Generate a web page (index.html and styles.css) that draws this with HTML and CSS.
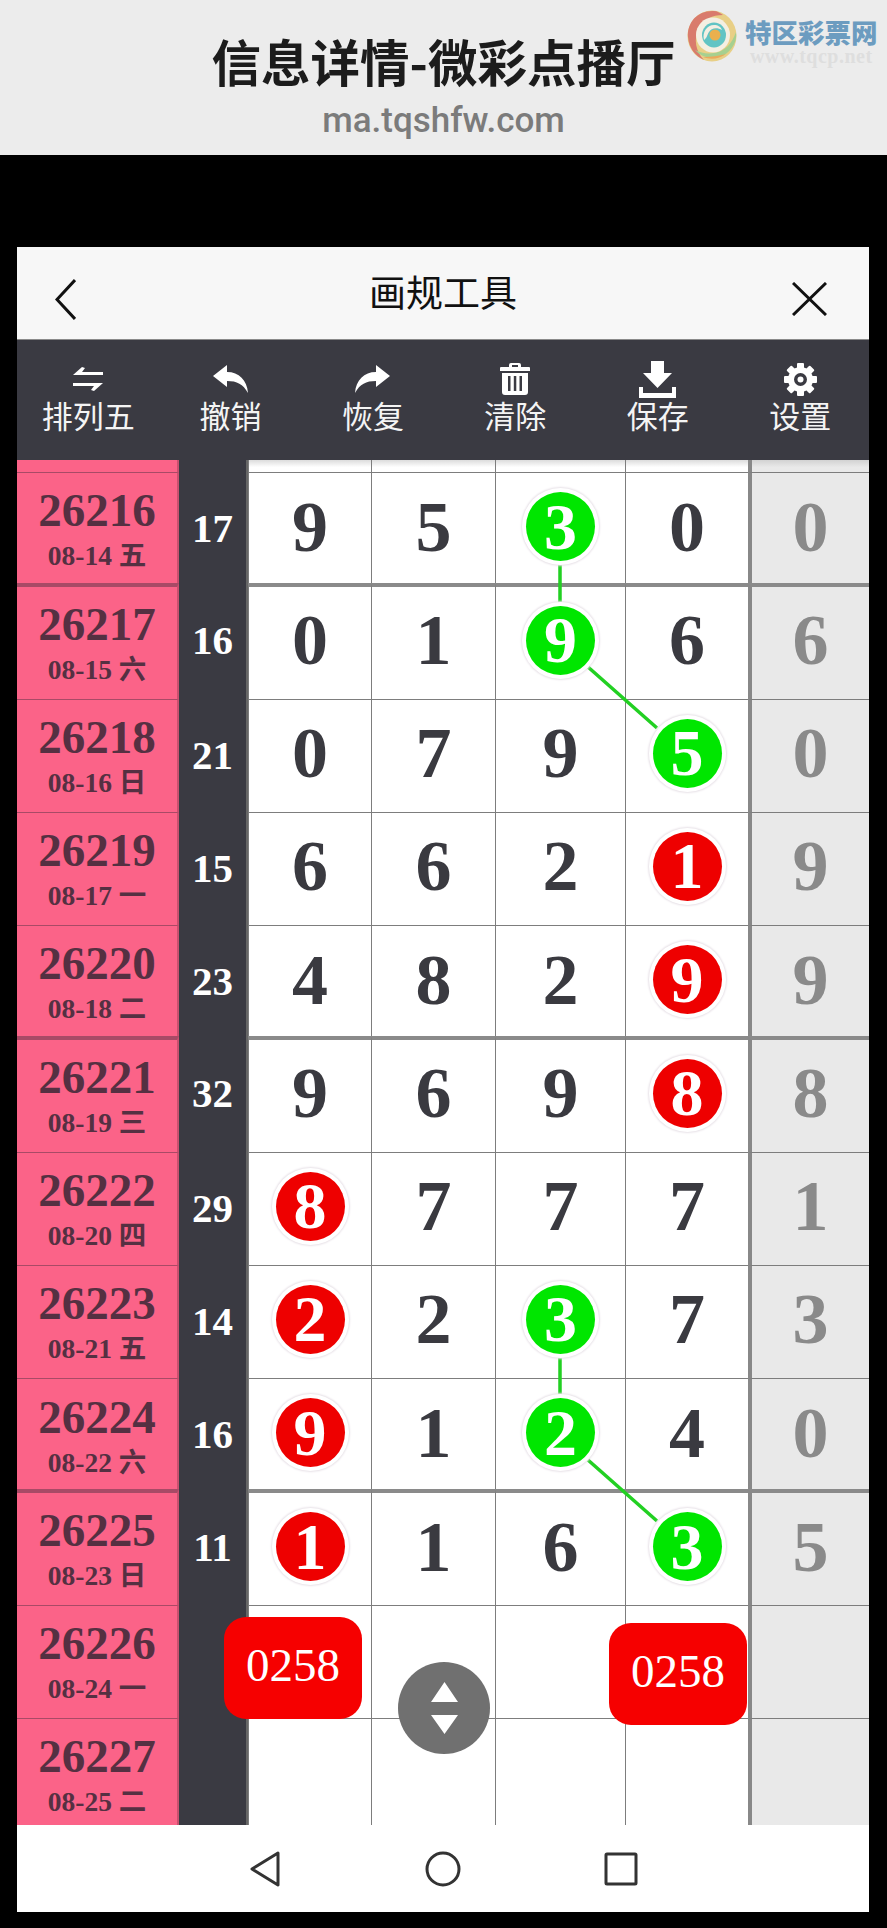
FILE: index.html
```html
<!DOCTYPE html>
<html>
  <head>
    <meta charset="utf-8" />
    <title>画规工具</title>
    <link rel="stylesheet" href="styles.css">
  </head>
  <body>
    <!-- Article header -->
    <header class="pagehead">
      <h1>信息详情-微彩点播厅</h1>
      <p class="domain">ma.tqshfw.com</p>
      <div class="watermark">
        <svg class="wm-logo" viewBox="0 0 50 52">
          <ellipse cx="25" cy="26" rx="24.500" ry="25.500" fill="#e8cf86"/>
          <path d="M27 1C11 0 0 12 1 27c1 11 7 19 16 23C9 42 6 29 12 18 17 9 25 5 36 5 33 3 30 1 27 1Z" fill="#d97b6c"/>
          <path d="M8 40c8 9 22 11 32 3 7-6 10-13 9-21-4 12-12 20-22 21-7 1-13 0-19-3Z" fill="#a6d090"/>
          <path d="M16 47c8 3 16 2 23-3-7 2-15 3-23 3Z" fill="#eba95c"/>
          <ellipse cx="26" cy="25" rx="17" ry="17.500" fill="#f4efe2"/>
          <ellipse cx="27" cy="25" rx="12" ry="12.500" fill="#62c4c4"/>
          <path d="M17 30c-2-8 3-15 10-15 4 0 7 2 8 5-5-3-11-2-13 2-2 3-2 6-5 8Z" fill="#f4efe2"/>
          <ellipse cx="28" cy="25" rx="5.500" ry="5.500" fill="#eab04e"/>
        </svg>
        <div class="wm-text">
          <span class="wm-name">特区彩票网</span>
          <span class="wm-url">www.tqcp.net</span>
        </div>
      </div>
    </header>

    <div class="window">
      <!-- Title bar -->
      <div class="titlebar">
        <svg class="back" viewBox="0 0 21 41"><path d="M20 1 2 20.500 20 40"/></svg>
        <span class="title">画规工具</span>
        <svg class="close" viewBox="0 0 35 34"><path d="M1 1 34 33M34 1 1 33"/></svg>
      </div>

      <!-- Toolbar -->
      <div class="toolbar">
        <div class="tool">
          <div class="ico"><svg width="30" height="24" viewBox="0 0 30 24"><path d="M0 8 9 0l3 1-3 4h21v3ZM30 16l-9 8-3-1 3-4H0v-3Z"/></svg></div>
          <span>排列五</span>
        </div>
        <div class="tool">
          <div class="ico"><svg width="35" height="28" viewBox="0 0 35 28"><path d="M0 11 14 0v7c12 0 20 8 21 21-5-9-11-12-21-12v6Z"/></svg></div>
          <span>撤销</span>
        </div>
        <div class="tool">
          <div class="ico"><svg width="35" height="28" viewBox="0 0 35 28"><path d="M35 11 21 0v7C9 7 1 15 0 28c5-9 11-12 21-12v6Z"/></svg></div>
          <span>恢复</span>
        </div>
        <div class="tool">
          <div class="ico"><svg width="30" height="32" viewBox="0 0 30 32"><path d="M9 4V2a2 2 0 0 1 2-2h8a2 2 0 0 1 2 2v2h8a1 1 0 0 1 1 1v3H0V5a1 1 0 0 1 1-1ZM12 2v2h6V2ZM2 10h26v19a3 3 0 0 1-3 3H5a3 3 0 0 1-3-3ZM8 13v15h2.500V13Zm5.800 0v15h2.500V13Zm5.700 0v15H22V13Z" fill-rule="evenodd"/></svg></div>
          <span>清除</span>
        </div>
        <div class="tool">
          <div class="ico"><svg width="37" height="37" viewBox="0 0 37 37"><path d="M12 0h13v12h8L18.500 27 4 12h8ZM0 26h4v6h29v-6h4v11H0Z"/></svg></div>
          <span>保存</span>
        </div>
        <div class="tool">
          <div class="ico"><svg width="33" height="33" viewBox="0 0 33 33">
            <g transform="translate(16.500 16.500)">
              <circle r="12.500"/>
              <rect x="-3.500" y="-16.500" width="7" height="33" rx="1"/>
              <rect x="-3.500" y="-16.500" width="7" height="33" rx="1" transform="rotate(45)"/>
              <rect x="-3.500" y="-16.500" width="7" height="33" rx="1" transform="rotate(90)"/>
              <rect x="-3.500" y="-16.500" width="7" height="33" rx="1" transform="rotate(135)"/>
              <circle r="6.500" fill="#3a3a42"/>
              <circle r="3"/>
            </g>
          </svg></div>
          <span>设置</span>
        </div>
      </div>

      <!-- Trend table -->
      <div class="board">
        <div class="row stub">
          <div class="date"></div><div class="sum"></div><div class="c"></div><div class="c"></div><div class="c"></div><div class="c"></div><div class="c last"></div>
        </div>

        <div class="row">
          <div class="date"><b>26216</b><small>08-14 五</small></div><div class="sum">17</div>
          <div class="c">9</div><div class="c">5</div><div class="c"><i class="ball green">3</i></div><div class="c">0</div><div class="c last">0</div>
        </div>
        <div class="row thick">
          <div class="date"><b>26217</b><small>08-15 六</small></div><div class="sum">16</div>
          <div class="c">0</div><div class="c">1</div><div class="c"><i class="ball green">9</i></div><div class="c">6</div><div class="c last">6</div>
        </div>
        <div class="row">
          <div class="date"><b>26218</b><small>08-16 日</small></div><div class="sum">21</div>
          <div class="c">0</div><div class="c">7</div><div class="c">9</div><div class="c"><i class="ball green">5</i></div><div class="c last">0</div>
        </div>
        <div class="row">
          <div class="date"><b>26219</b><small>08-17 一</small></div><div class="sum">15</div>
          <div class="c">6</div><div class="c">6</div><div class="c">2</div><div class="c"><i class="ball red">1</i></div><div class="c last">9</div>
        </div>
        <div class="row">
          <div class="date"><b>26220</b><small>08-18 二</small></div><div class="sum">23</div>
          <div class="c">4</div><div class="c">8</div><div class="c">2</div><div class="c"><i class="ball red">9</i></div><div class="c last">9</div>
        </div>
        <div class="row thick">
          <div class="date"><b>26221</b><small>08-19 三</small></div><div class="sum">32</div>
          <div class="c">9</div><div class="c">6</div><div class="c">9</div><div class="c"><i class="ball red">8</i></div><div class="c last">8</div>
        </div>
        <div class="row">
          <div class="date"><b>26222</b><small>08-20 四</small></div><div class="sum">29</div>
          <div class="c"><i class="ball red">8</i></div><div class="c">7</div><div class="c">7</div><div class="c">7</div><div class="c last">1</div>
        </div>
        <div class="row">
          <div class="date"><b>26223</b><small>08-21 五</small></div><div class="sum">14</div>
          <div class="c"><i class="ball red">2</i></div><div class="c">2</div><div class="c"><i class="ball green">3</i></div><div class="c">7</div><div class="c last">3</div>
        </div>
        <div class="row">
          <div class="date"><b>26224</b><small>08-22 六</small></div><div class="sum">16</div>
          <div class="c"><i class="ball red">9</i></div><div class="c">1</div><div class="c"><i class="ball green">2</i></div><div class="c">4</div><div class="c last">0</div>
        </div>
        <div class="row thick">
          <div class="date"><b>26225</b><small>08-23 日</small></div><div class="sum">11</div>
          <div class="c"><i class="ball red">1</i></div><div class="c">1</div><div class="c">6</div><div class="c"><i class="ball green">3</i></div><div class="c last">5</div>
        </div>
        <div class="row">
          <div class="date"><b>26226</b><small>08-24 一</small></div><div class="sum"></div>
          <div class="c"></div><div class="c"></div><div class="c"></div><div class="c"></div><div class="c last"></div>
        </div>
        <div class="row">
          <div class="date"><b>26227</b><small>08-25 二</small></div><div class="sum"></div>
          <div class="c"></div><div class="c"></div><div class="c"></div><div class="c"></div><div class="c last"></div>
        </div>

        <!-- Lines drawn by hand between the marked numbers -->
        <svg class="links" width="852" height="1365" viewBox="17 460 852 1365">
          <path d="M560 560 560 606M588 667 657 728M560 1353 560 1399M588 1460 657 1521"/>
        </svg>

        <div class="tag tag-left">0258</div>
        <div class="tag tag-right">0258</div>
        <div class="updown">
          <svg width="27" height="52" viewBox="0 0 27 52"><path d="M13.500 0 27 20H0ZM0 33h27L13.500 52Z"/></svg>
        </div>
      </div>

      <!-- System navigation -->
      <div class="navbar">
        <svg width="32" height="36" viewBox="0 0 32 36"><path d="M29 2 3 18 29 34Z"/></svg>
        <svg width="36" height="36" viewBox="0 0 36 36"><circle cx="18" cy="18" r="16"/></svg>
        <svg width="34" height="34" viewBox="0 0 34 34"><rect x="2" y="2" width="30" height="30" rx="1"/></svg>
      </div>
    </div>
  </body>
</html>
```

FILE: styles.css
```css
* {
  box-sizing: border-box;
}
html, body {
  margin: 0;
  background: #000;
}
body {
  width: 887px;
  height: 1928px;
  overflow: hidden;
  font-family: "Noto Sans CJK SC", "Noto Sans", sans-serif;
}

/* Article header */
.pagehead {
  position: relative;
  height: 155px;
  background: #ececec;
  text-align: center;
  padding-top: 29px;
}
.pagehead h1 {
  width: 470px;
  margin: 0 auto;
  font-size: 49.500px;
  line-height: 64px;
  font-weight: 700;
  white-space: nowrap;
  color: #1c1c1c;
}
.domain {
  margin: 5px 0 0;
  font-family: Roboto, "Noto Sans", sans-serif;
  font-size: 35px;
  line-height: 46px;
  font-weight: 500;
  color: #7b7b7b;
}
.watermark {
  position: absolute;
  left: 687px;
  top: 10px;
  display: flex;
  gap: 8px;
}
.wm-logo {
  width: 50px;
  height: 52px;
}
.wm-text {
  display: flex;
  flex-direction: column;
  padding-top: 7px;
}
.wm-name {
  font-size: 26.500px;
  line-height: 30px;
  font-weight: 900;
  color: #6c9cc0;
  white-space: nowrap;
}
.wm-url {
  font-family: "Liberation Serif", serif;
  font-size: 20px;
  line-height: 18px;
  font-weight: 700;
  letter-spacing: 0.5px;
  color: #dedede;
}

/* Window */
.window {
  margin: 92px 18px 0 17px;
  width: 852px;
}
.titlebar {
  display: flex;
  align-items: center;
  justify-content: space-between;
  height: 93px;
  padding: 0 42px 0 38px;
  background: #f7f7f7;
  border-bottom: 1px solid #8a8a8a;
  position: relative;
}
.titlebar svg {
  fill: none;
  stroke: #111;
  stroke-width: 3;
}
.back {
  width: 21px;
  height: 41px;
  margin-top: 12px;
}
.close {
  width: 35px;
  height: 34px;
  margin-top: 11px;
}
.title {
  position: absolute;
  left: 0;
  right: 0;
  top: 20px;
  text-align: center;
  font-size: 37px;
  line-height: 48px;
  color: #111;
}

.toolbar {
  display: grid;
  grid-template-columns: repeat(6, 142.4px);
  height: 120px;
  background: #3a3a42;
  color: #f4f4f4;
}
.tool {
  display: flex;
  flex-direction: column;
  align-items: center;
  justify-content: flex-end;
  height: 96px;
  font-size: 31px;
  line-height: 42px;
}
.ico {
  display: flex;
  align-items: center;
  height: 30px;
  fill: #fff;
}
.ico svg {
  flex-shrink: 0;
}

/* Table */
.board {
  position: relative;
  height: 1365px;
  overflow: hidden;
}
.row {
  display: grid;
  grid-template-columns: 162px 69px 123px 124px 130px 123px 121px;
  height: 113.27px;
}
.row.stub {
  height: 12px;
}
.row.thick {
  height: 115.27px;
  margin-top: -2px;
}
.date, .sum, .c {
  display: flex;
  align-items: center;
  justify-content: center;
  font-family: "Liberation Serif", serif;
  font-weight: 700;
  line-height: 1;
}
.date {
  flex-direction: column;
  background: #fb6388;
  border-top: 1px solid #a84a66;
  border-right: 2px solid #c9506f;
  color: #553042;
  padding: 4px 0 5px;
}
.date b {
  font-size: 47px;
}
.date small {
  margin-top: 8px;
  font-size: 27.500px;
  font-family: "Liberation Serif", "Noto Sans CJK SC", serif;
}
.sum {
  background: #3a3a42;
  border-right: 2px solid #666;
  color: #fff;
  font-size: 41px;
}
.c {
  position: relative;
  background: #fff;
  border-top: 1px solid #7d7d7d;
  border-left: 1px solid #7d7d7d;
  color: #3a3a40;
  font-size: 72px;
  padding-bottom: 5px;
}
.c.last {
  background: #e9e9e9;
  border-left: 4px solid #888;
  color: #8a8a8a;
}
.row.thick .date {
  border-top: 4px solid #a84a66;
}
.row.thick .c {
  border-top-width: 4px;
  border-top-color: #8a8a8a;
}
.stub .date, .stub .c {
  padding: 0;
  border-top: 0;
}
.stub .c {
  background: linear-gradient(#dcdcdc, #fff 60%);
}
.stub .c.last {
  background: linear-gradient(#d2d2d2, #e9e9e9 60%);
}

.ball {
  position: relative;
  z-index: 2;
  display: flex;
  align-items: center;
  justify-content: center;
  width: 69px;
  height: 69px;
  border-radius: 50%;
  font-style: normal;
  font-size: 66px;
  color: #fff;
  box-shadow: 0 0 0 4px #fff, 0 0 2px 5px #e8e2e8;
}
.ball.green {
  background: #00e600;
}
.ball.red {
  background: #ee0000;
}
.links {
  position: absolute;
  left: 0;
  top: 0;
  z-index: 1;
  fill: none;
  stroke: #22d022;
  stroke-width: 3.500;
}

/* Floating controls */
.tag {
  position: absolute;
  z-index: 3;
  width: 138px;
  height: 102px;
  display: flex;
  align-items: center;
  justify-content: center;
  padding-bottom: 6px;
  border-radius: 22px;
  background: #f60000;
  color: #fff;
  font-family: "Liberation Serif", serif;
  font-size: 47px;
}
.tag-left {
  left: 207px;
  top: 1157px;
}
.tag-right {
  left: 592px;
  top: 1163px;
}
.updown {
  position: absolute;
  z-index: 3;
  left: 381px;
  top: 1202px;
  width: 92px;
  height: 92px;
  display: flex;
  align-items: center;
  justify-content: center;
  border-radius: 50%;
  background: #707070;
}
.updown svg {
  fill: #fff;
}

/* System navigation */
.navbar {
  position: relative;
  height: 87px;
  background: #fff;
}
.navbar svg {
  position: absolute;
  top: 26px;
  fill: none;
  stroke: #333;
  stroke-width: 3;
  stroke-linejoin: round;
}
.navbar svg:nth-child(1) {
  left: 232px;
}
.navbar svg:nth-child(2) {
  left: 408px;
}
.navbar svg:nth-child(3) {
  left: 587px;
  top: 27px;
}
```
